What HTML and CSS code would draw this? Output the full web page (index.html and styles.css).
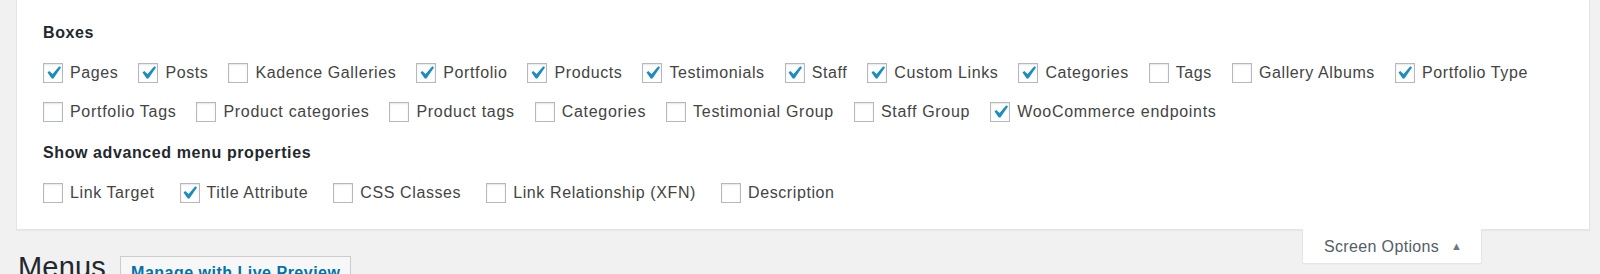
FILE: index.html
```html
<html>
<head>
<title>Menus</title>
<meta http-equiv="Content-Type" content="text/html; charset=UTF-8" />
<link rel="stylesheet" href="styles.css">
</head>
<body>

<div class="ScreenMeta">
  <div class="Group">
    <h5 class="Legend">Boxes</h5>
    <div class="Opts">
      <label class="Opt"><span class="Box on"><svg viewBox="0 0 20 20"><path d="M14.83 4.89l1.34.94-5.81 8.38H9.02L5.78 9.67l1.34-1.25 2.570 2.4z"/></svg></span>Pages</label>
      <label class="Opt"><span class="Box on"><svg viewBox="0 0 20 20"><path d="M14.83 4.89l1.34.94-5.81 8.38H9.02L5.78 9.67l1.34-1.25 2.57 2.4z"/></svg></span>Posts</label>
      <label class="Opt"><span class="Box"></span>Kadence Galleries</label>
      <label class="Opt"><span class="Box on"><svg viewBox="0 0 20 20"><path d="M14.83 4.89l1.34.94-5.81 8.38H9.02L5.78 9.67l1.34-1.25 2.57 2.4z"/></svg></span>Portfolio</label>
      <label class="Opt"><span class="Box on"><svg viewBox="0 0 20 20"><path d="M14.83 4.89l1.34.94-5.81 8.38H9.02L5.78 9.67l1.34-1.25 2.57 2.4z"/></svg></span>Products</label>
      <label class="Opt"><span class="Box on"><svg viewBox="0 0 20 20"><path d="M14.83 4.89l1.34.94-5.81 8.38H9.02L5.78 9.67l1.34-1.25 2.57 2.4z"/></svg></span>Testimonials</label>
      <label class="Opt"><span class="Box on"><svg viewBox="0 0 20 20"><path d="M14.83 4.89l1.34.94-5.81 8.38H9.02L5.78 9.67l1.34-1.25 2.57 2.4z"/></svg></span>Staff</label>
      <label class="Opt"><span class="Box on"><svg viewBox="0 0 20 20"><path d="M14.83 4.89l1.34.94-5.81 8.38H9.02L5.78 9.67l1.34-1.25 2.57 2.4z"/></svg></span>Custom Links</label>
      <label class="Opt"><span class="Box on"><svg viewBox="0 0 20 20"><path d="M14.83 4.89l1.34.94-5.81 8.38H9.02L5.78 9.67l1.34-1.25 2.57 2.4z"/></svg></span>Categories</label>
      <label class="Opt"><span class="Box"></span>Tags</label>
      <label class="Opt"><span class="Box"></span>Gallery Albums</label>
      <label class="Opt"><span class="Box on"><svg viewBox="0 0 20 20"><path d="M14.83 4.89l1.34.94-5.81 8.38H9.02L5.78 9.67l1.34-1.25 2.57 2.4z"/></svg></span>Portfolio Type</label>
      <label class="Opt"><span class="Box"></span>Portfolio Tags</label>
      <label class="Opt"><span class="Box"></span>Product categories</label>
      <label class="Opt"><span class="Box"></span>Product tags</label>
      <label class="Opt"><span class="Box"></span>Categories</label>
      <label class="Opt"><span class="Box"></span>Testimonial Group</label>
      <label class="Opt"><span class="Box"></span>Staff Group</label>
      <label class="Opt"><span class="Box on"><svg viewBox="0 0 20 20"><path d="M14.83 4.89l1.34.94-5.81 8.38H9.02L5.78 9.67l1.34-1.25 2.57 2.4z"/></svg></span>WooCommerce endpoints</label>
    </div>
  </div>
  <div class="Group Advanced">
    <h5 class="Legend">Show advanced menu properties</h5>
    <div class="Opts">
      <label class="Opt"><span class="Box"></span>Link Target</label>
      <label class="Opt"><span class="Box on"><svg viewBox="0 0 20 20"><path d="M14.83 4.89l1.34.94-5.81 8.38H9.02L5.78 9.67l1.34-1.25 2.57 2.4z"/></svg></span>Title Attribute</label>
      <label class="Opt"><span class="Box"></span>CSS Classes</label>
      <label class="Opt"><span class="Box"></span>Link Relationship (XFN)</label>
      <label class="Opt"><span class="Box"></span>Description</label>
    </div>
  </div>
</div>

<div class="Wrap">
  <div class="MetaLinks">
    <div class="MetaTab">Screen Options <span class="Arrow">&#9650;</span></div>
  </div>
  <div class="TitleRow">
    <h1 class="Title">Menus</h1>
    <a class="Action">Manage with Live Preview</a>
  </div>
</div>

</body>
</html>
```

FILE: styles.css
```css
body{
   margin:0;
   background:#f1f1f1;
   color:#444;
   font-family:"Liberation Sans", Arial, sans-serif;
   font-size:16px;
   letter-spacing:0.6px;
   -webkit-font-smoothing: antialiased;
}
.ScreenMeta{
   margin:0 10px 0 16px;
   padding:21px 26px 26px 26px;
   background:#fff;
   border:1px solid #e5e5e5;
   border-top:none;
   box-shadow:0 1px 1px rgba(0,0,0,0.04);
}
.Legend{
   margin:0 0 18px 0;
   font-size:16px;
   font-weight:700;
   line-height:24px;
   color:#23282d;
}
.Opts{
   display:flex;
   flex-wrap:wrap;
   column-gap:20px;
   row-gap:19px;
   margin-bottom:19px;
}
.Opts .Opt:nth-child(n+13){
   letter-spacing:0.7px;
}
.Advanced .Opts{
   column-gap:25px;
   margin-bottom:0;
}
.Opt{
   display:flex;
   align-items:center;
   gap:7px;
   height:20px;
   line-height:20px;
   white-space:nowrap;
}
.Box{
   display:flex;
   align-items:center;
   justify-content:center;
   box-sizing:border-box;
   width:20px;
   height:20px;
   border:1px solid #b4b9be;
   background:#fff;
   box-shadow:inset 0 1px 2px rgba(0,0,0,0.1);
}
.Box svg{
   flex:none;
   width:26px;
   height:26px;
   margin:0 -3px 0 -4px;
   fill:#1e8cbe;
}
.Wrap{
   padding:0 0 0 18px;
}
.MetaLinks{
   float:right;
   margin:-1px 118px 0 0;
}
.MetaTab{
   box-sizing:border-box;
   width:180px;
   height:35px;
   padding:7px 0 0 21px;
   background:#fff;
   border:1px solid #e5e5e5;
   border-top:none;
   box-shadow:0 1px 1px -1px rgba(0,0,0,0.1);
   color:#555d66;
   line-height:20px;
   letter-spacing:0.35px;
}
.Arrow{
   font-size:11px;
   margin-left:7px;
   vertical-align:2px;
   color:#72777c;
}
.TitleRow{
   display:flex;
   align-items:flex-start;
   gap:14px;
   padding-top:19px;
}
.Title{
   margin:0;
   font-size:29px;
   font-weight:400;
   line-height:36px;
   letter-spacing:0.2px;
   color:#23282d;
}
.Action{
   margin-top:7px;
   padding:6px 10px;
   border:1px solid #ccc;
   background:#f7f7f7;
   color:#0073aa;
   font-weight:700;
   line-height:20px;
   letter-spacing:0.5px;
}
```
